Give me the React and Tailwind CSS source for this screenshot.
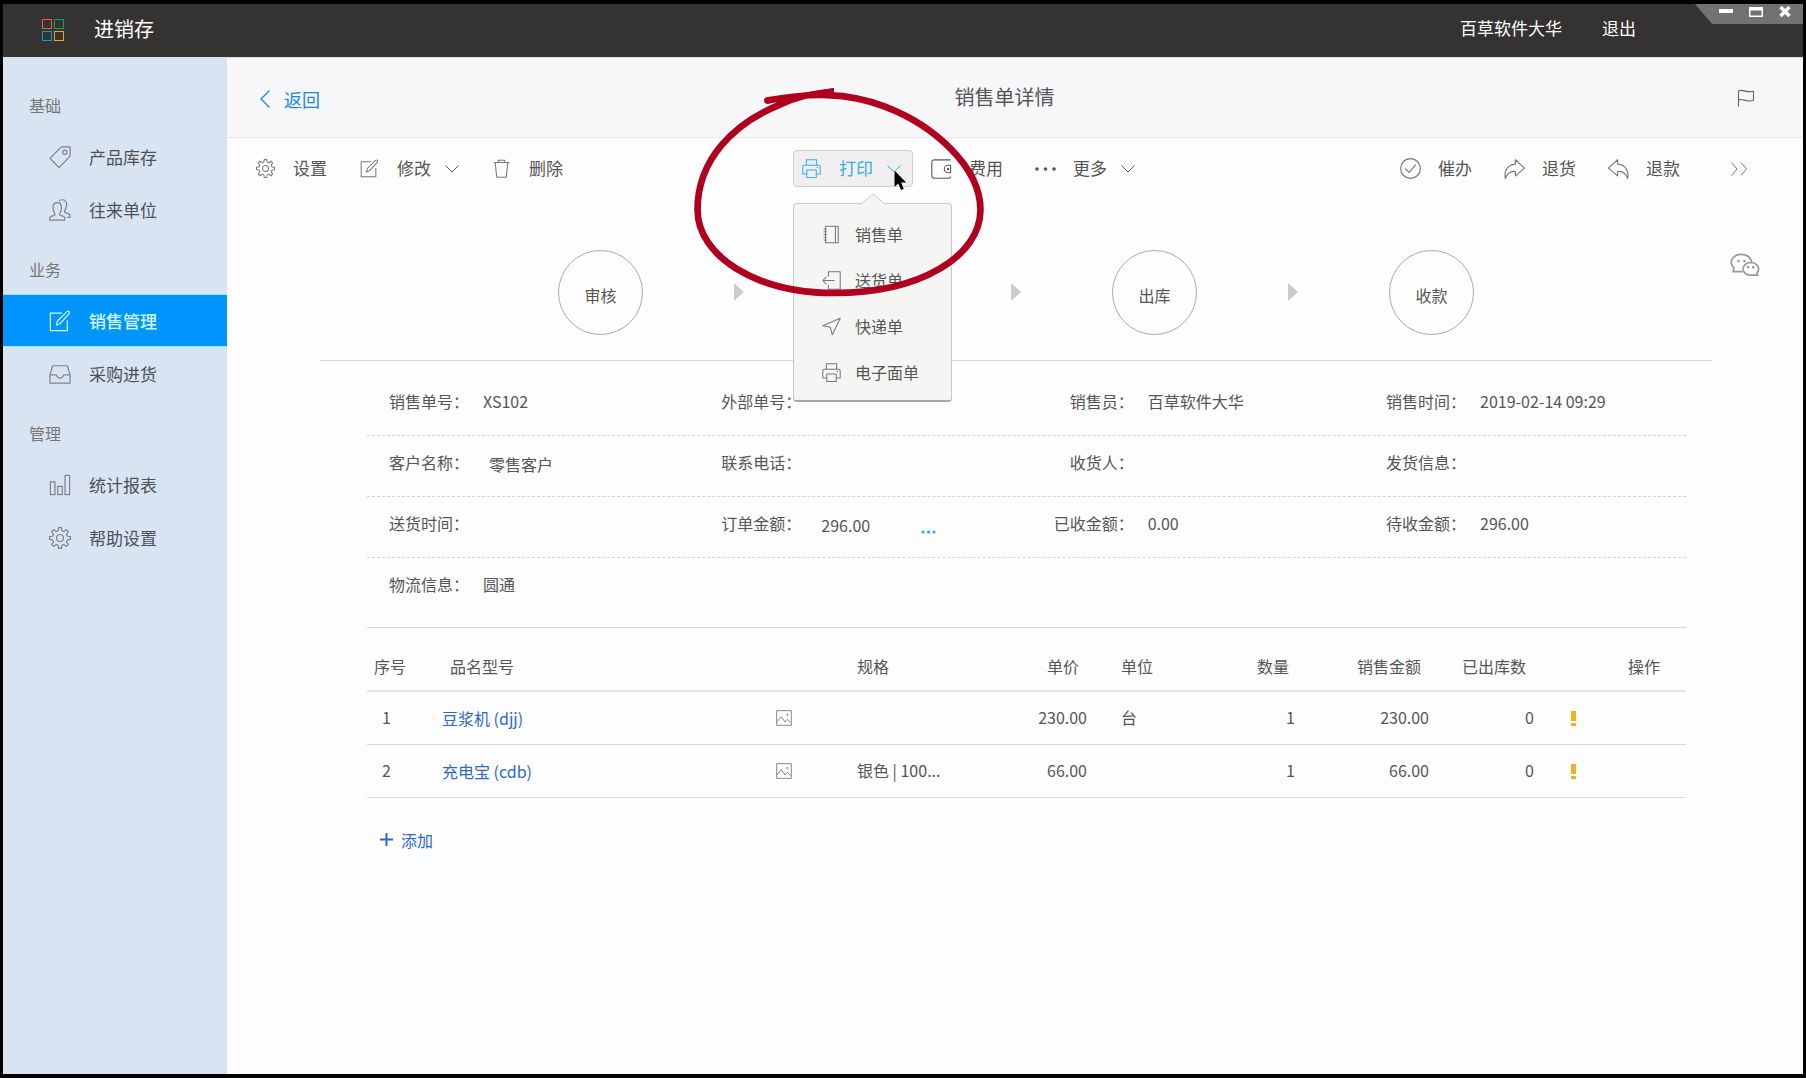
import clsx from "clsx";

// eight-tooth cog outline around (12, 12)
function cogPath() {
  const point = (radius, angle) => {
    const rad = (angle * Math.PI) / 180;
    return `${(12 + radius * Math.cos(rad)).toFixed(2)} ${(12 + radius * Math.sin(rad)).toFixed(2)}`;
  };
  let d = `M${point(11.5, -8)}`;
  for (let i = 0; i < 8; i++) {
    const a = i * 45;
    d += `L${point(11.5, a + 8)}L${point(9, a + 12)}Q${point(7.2, a + 22.5)} ${point(9, a + 33)}L${point(11.5, a + 37)}`;
  }
  return d + "Z";
}

const ICONS = {
  cog: (
    <>
      <path d={cogPath()} />
      <circle cx="12" cy="12" r="3.8" />
    </>
  ),
  tag: (
    <>
      <path d="M13.5 1h9.500v10L11 23.500 1 13.5z" />
      <circle cx="17.3" cy="6.8" r="2.3" />
    </>
  ),
  users: (
    <>
      <path d="M.8 23v-2c0-1.500.7-2 2-2.300 2.500-.6 3.600-.8 3.800-2 .1-.9-2.200-3-2.200-7C4.400 6 6.200 4 9 4s4.600 2 4.600 5.700c0 4-2.300 6.100-2.200 7 .2 1.200 1.300 1.400 3.800 2 1.300.3 2 .8 2 2.300v2z" />
      <path d="M11 2.300C11.800 1.300 13 .8 14.500.8c2.900 0 4.700 2 4.700 5.500 0 4-2.200 6-2.200 7.200 0 1.300 1.400 1.700 3.300 2.200 1.800.5 2.700 1 2.700 2.500V20h-3" />
    </>
  ),
  edit: (
    <>
      <path d="M14 3.500H1.500v19H20V11.500" />
      <path d="M8 16.500l1.300-4.500L19.500 1.800q1.200-1 2.300 0t0 2.400L11.800 15z" />
    </>
  ),
  inbox: (
    <>
      <path d="M4 3h16l3 10v9H1v-9z" />
      <path d="M1 13h7q1 3.500 4 3.500t4-3.500h7" />
    </>
  ),
  chart: <path d="M1.500 8.500h5v14h-5zM9.500 13.500h5v9h-5zM17.500 1.500h5v21h-5z" />,
  trash: (
    <>
      <path d="M2 4.500h20M8 4.500v-3h8v3" />
      <path d="M4 4.500l2 18.500h12l2-18.500" />
    </>
  ),
  printer: (
    <>
      <path d="M5.500 8V1h13v7" />
      <path d="M6 19H1V10q0-2 2-2h18q2 0 2 2v9h-5" />
      <path d="M6 14h12v9.500H6zM18.500 10.800h2" />
    </>
  ),
  wallet: (
    <>
      <path d="M23.500 1H4Q1 1 1 4v16q0 3 3 3h17q2.500 0 2.500-2" />
      <path d="M23.500 7.500h-3a4.500 4.500 0 0 0 0 9h3z" />
      <circle cx="20.500" cy="12" r=".8" />
    </>
  ),
  notebook: (
    <>
      <path d="M4.500 1.500h16v21h-16zM17 1.500v21" />
      <path d="M2 5h4M2 8.500h4M2 12h4M2 15.500h4M2 19h4" />
    </>
  ),
  dispatch: (
    <>
      <path d="M8 7V1h15v22H8v-6" />
      <path d="M16 12H1M5.500 7.500L1 12l4.500 4.500" />
    </>
  ),
  send: <path d="M23 1.500L1 11l9.500 2L13 22.500z" />,
  check: (
    <>
      <circle cx="12" cy="12" r="11.300" />
      <path d="M6 12l4.500 4.500L18 7.500" />
    </>
  ),
  forward: <path d="M13 2l10.500 9.500L13 20.500V15.500C7 14.500 4 17 1.500 23.500 0 14 4 8 13 7z" />,
  reply: <path d="M11 2L.5 11.500 11 20.500V15.500c6-1 9 1.500 11.500 8C24 14 20 8 11 7z" />,
  flag: (
    <>
      <path d="M2 23.500V2.500" />
      <path d="M2 2.500c6-3 9 3 20 .5v12c-10 3.500-14-3-20-.5" />
    </>
  ),
  image: (
    <>
      <path d="M1 1h22v22H1z" />
      <path d="M1.500 18l6.500-8 5.500 8 3.500-4 5.500 5" />
      <circle cx="17" cy="7.500" r="1" />
    </>
  ),
  wechat: (
    <>
      <path d="M10.500 17H2.500l.8-3C-1.500 9.500 2 2.800 9.500 2.800c4.500 0 7.800 2.700 8.500 6.200" />
      <path d="M17 9.500c-8 .2-8.500 10.300 0 10.500h6l-.8-1.800c3.200-3.500.6-8.600-5.200-8.700z" />
      <path d="M7 8.200v.2M12 8.200v.2M15 13.200v.2M19.200 13.200v.2" strokeWidth="2" strokeLinecap="round" />
    </>
  ),
};

function Icon({ name, className, strokeWidth = 1.3 }) {
  return (
    <svg
      viewBox="0 0 24 24"
      fill="none"
      stroke="currentColor"
      strokeWidth={strokeWidth}
      strokeLinejoin="round"
      aria-hidden="true"
      className={clsx("shrink-0 overflow-visible", className)}
    >
      {ICONS[name]}
    </svg>
  );
}

function Caret() {
  return (
    <svg viewBox="0 0 14 8" fill="none" stroke="currentColor" className="ml-[14px] h-2 w-[14px]" aria-hidden="true">
      <path d="M.5.5L7 7 13.500.5" />
    </svg>
  );
}

const NAV = [
  {
    title: "基础",
    items: [
      { icon: "tag", label: "产品库存" },
      { icon: "users", label: "往来单位" },
    ],
  },
  {
    title: "业务",
    items: [
      { icon: "edit", label: "销售管理", active: true },
      { icon: "inbox", label: "采购进货" },
    ],
  },
  {
    title: "管理",
    items: [
      { icon: "chart", label: "统计报表" },
      { icon: "cog", label: "帮助设置" },
    ],
  },
];

const PRINT_MENU = [
  { icon: "notebook", label: "销售单" },
  { icon: "dispatch", label: "送货单" },
  { icon: "send", label: "快递单" },
  { icon: "printer", label: "电子面单" },
];

// the second step has no caption while the print menu is open over it
const STEPS = ["审核", "", "出库", "收款"];

const DETAILS = [
  [
    { label: "销售单号", value: "XS102" },
    { label: "外部单号" },
    { label: "销售员", value: "百草软件大华" },
    { label: "销售时间", value: "2019-02-14 09:29" },
  ],
  [
    { label: "客户名称", value: "零售客户", editable: true },
    { label: "联系电话" },
    { label: "收货人" },
    { label: "发货信息" },
  ],
  [
    { label: "送货时间" },
    { label: "订单金额", value: "296.00", editable: true, more: true },
    { label: "已收金额", value: "0.00" },
    { label: "待收金额", value: "296.00" },
  ],
  [{ label: "物流信息", value: "圆通" }],
];

const ROWS = [
  { no: 1, name: "豆浆机 (djj)", spec: "", price: "230.00", unit: "台", qty: 1, total: "230.00", out: 0 },
  { no: 2, name: "充电宝 (cdb)", spec: "银色 | 100...", price: "66.00", unit: "", qty: 1, total: "66.00", out: 0 },
];

function TopBar() {
  return (
    <header className="relative flex h-[53px] items-center bg-[#353332] pr-[167px] pl-[39px] text-white">
      <div className="mb-[2px] grid grid-cols-2 gap-[2px]" aria-hidden="true">
        <span className="size-[10px] border border-[#e8604c]" />
        <span className="size-[10px] border border-[#12a05c]" />
        <span className="size-[10px] border border-[#0f9ad8]" />
        <span className="size-[10px] border border-[#f0a020]" />
      </div>
      <h1 className="ml-[30px] pb-1 text-xl">进销存</h1>
      <div className="ml-auto flex gap-10 pb-[6px] text-[17px]">
        <a href="#account">百草软件大华</a>
        <a href="#logout">退出</a>
      </div>
      <div className="absolute top-0 right-0 flex h-5 w-[108px] items-start gap-4 bg-[#727272] pt-[2px] pl-6 [clip-path:polygon(0_0,100%_0,100%_100%,17px_100%)]">
        <button type="button" aria-label="最小化">
          <svg viewBox="0 0 14 12" className="h-3 w-[14px]"><path d="M0 3h14v4H0z" fill="#fff" /></svg>
        </button>
        <button type="button" aria-label="最大化">
          <svg viewBox="0 0 14 12" className="h-3 w-[14px]"><path d="M0 1h14v10H0zM1.500 4.500v5h11v-5z" fill="#fff" fillRule="evenodd" /></svg>
        </button>
        <button type="button" aria-label="关闭">
          <svg viewBox="0 0 12 12" className="size-3"><path d="M1.500 1l9 9M10.500 1l-9 9" stroke="#fff" strokeWidth="3.500" /></svg>
        </button>
      </div>
    </header>
  );
}

function Sidebar() {
  return (
    <nav className="w-[224px] shrink-0 bg-[#d9e4f2] pt-[15px]">
      {NAV.map((group) => (
        <section key={group.title}>
          <h2 className="h-[58px] pt-[21px] pl-[26px] text-base leading-6 text-[#777]">{group.title}</h2>
          <ul>
            {group.items.map((item) => (
              <li key={item.label}>
                <a
                  href="#nav"
                  className={clsx(
                    "flex h-[53px] items-center pl-[46px] text-[17px]",
                    item.active
                      ? "border-y border-[#7df3fb] bg-[#0094fd] font-medium text-[#d5fdff]"
                      : "text-[#4c5157]"
                  )}
                >
                  <Icon name={item.icon} className={clsx("size-[22px]", !item.active && "text-[#7c828a]")} />
                  <span className="ml-[18px]">{item.label}</span>
                </a>
              </li>
            ))}
          </ul>
        </section>
      ))}
    </nav>
  );
}

function PageHeader() {
  return (
    <div className="grid h-[81px] grid-cols-[1fr_auto_1fr] items-center border-y border-t-[#e4dfe2] border-b-[#e6e6ea] bg-[#f7f7fa] pr-12 pl-[27px]">
      <a href="#back" className="flex items-center gap-[14px] pt-[2px] pl-[6px] text-lg text-[#1b87e6]">
        <svg viewBox="0 0 10 18" fill="none" stroke="currentColor" strokeWidth="1.300" className="h-[18px] w-[10px]" aria-hidden="true">
          <path d="M9.500.5L1 9l8.500 8.500" />
        </svg>
        返回
      </a>
      <h2 className="pb-[2px] text-xl text-[#555]">销售单详情</h2>
      <button type="button" aria-label="标记" className="justify-self-end text-[#666]">
        <Icon name="flag" className="size-[18px]" strokeWidth={1.5} />
      </button>
    </div>
  );
}

function ToolButton({ icon, label, caret, large }) {
  return (
    <button type="button" className="flex items-center">
      <Icon name={icon} className={clsx("text-[#777]", large ? "size-[21px]" : "size-[19px]")} />
      <span className={clsx("pb-[2px]", large ? "ml-[17px]" : "ml-[18px]")}>{label}</span>
      {caret && <Caret />}
    </button>
  );
}

function PrintMenu() {
  return (
    <div className="absolute top-[53px] left-0 z-10 w-[159px] rounded border border-b-2 border-[#c9c9c9] border-b-[#a5a5a5] bg-[#f5f5f4] pt-[7px] pb-[5px] text-base">
      <svg viewBox="0 0 26 12" className="absolute -top-[11px] left-[66px] h-3 w-[26px]" aria-hidden="true">
        <path d="M0 12L13 1l13 11" fill="#f5f5f4" stroke="#c9c9c9" />
      </svg>
      <ul>
        {PRINT_MENU.map((item) => (
          <li key={item.label}>
            <button type="button" className="flex h-[46px] w-full items-center pl-7">
              <Icon name={item.icon} className="size-[19px] text-[#777]" />
              <span className="ml-[14px]">{item.label}</span>
            </button>
          </li>
        ))}
      </ul>
    </div>
  );
}

// hand-drawn ring and pointer that call out the print button
function Callout() {
  return (
    <div className="pointer-events-none">
      <svg viewBox="0 0 900 700" className="absolute -top-[80px] -left-[113px] z-20 h-[233px] w-[300px] max-w-none overflow-visible" aria-hidden="true">
        <path
          d="M260 92C390 68 500 66 615 110C760 165 902 290 902 420C902 560 720 670 462 670C230 670 52 560 52 420C52 270 160 160 300 104C340 85 400 68 462 66"
          fill="none"
          stroke="#b00020"
          strokeWidth="20"
          strokeLinejoin="round"
        />
        <circle cx="262" cy="92" r="10" fill="#b00020" />
        <path d="M370 69L462 53V80H350z" fill="#b00020" />
      </svg>
      <svg viewBox="0 0 13 21" className="absolute top-[20px] left-[101px] z-30 h-[21px] w-[13px] overflow-visible" aria-hidden="true">
        <path d="M.5.5v16.500l3.700-3.500 2.800 6.500 2.800-1.200-2.700-6.300h5.200z" fill="#000" stroke="#fff" strokeWidth="1.200" paintOrder="stroke" />
      </svg>
    </div>
  );
}

function Toolbar() {
  return (
    <div className="grid grid-cols-[537px_1fr_auto] items-center pt-3 pr-[56px] pl-[29px] text-[17px] text-[#555]">
      <div className="flex items-center gap-[33px]">
        <ToolButton icon="cog" label="设置" />
        <ToolButton icon="edit" label="修改" caret />
        <ToolButton icon="trash" label="删除" />
      </div>
      <div className="flex items-center">
        <div className="relative">
          <button type="button" aria-expanded="true" className="flex h-[37px] w-[120px] items-center rounded border border-[#cfcfcf] bg-[#efefef] pl-2 text-[#36abe6]">
            <Icon name="printer" className="size-[19px]" />
            <span className="ml-[18px] pb-[2px]">打印</span>
            <Caret />
          </button>
          <PrintMenu />
          <Callout />
        </div>
        <button type="button" className="ml-[18px] flex items-center">
          <Icon name="wallet" className="size-5" />
          <span className="ml-[18px] pb-[2px]">费用</span>
        </button>
        <button type="button" className="ml-8 flex items-center">
          <svg viewBox="0 0 21 4" className="h-1 w-[21px]" fill="currentColor" aria-hidden="true">
            <circle cx="2" cy="2" r="1.800" />
            <circle cx="10.500" cy="2" r="1.800" />
            <circle cx="19" cy="2" r="1.800" />
          </svg>
          <span className="ml-[17px] pb-[2px]">更多</span>
          <Caret />
        </button>
      </div>
      <div className="flex items-center gap-8">
        <ToolButton icon="check" label="催办" large />
        <ToolButton icon="forward" label="退货" large />
        <ToolButton icon="reply" label="退款" large />
        <button type="button" aria-label="展开" className="ml-[19px]">
          <svg viewBox="0 0 16 14" fill="none" stroke="#777" className="h-[14px] w-4" aria-hidden="true">
            <path d="M.5.5L6 7 .5 13.500M10 .5L15.500 7 10 13.500" />
          </svg>
        </button>
      </div>
    </div>
  );
}

function Steps() {
  return (
    <div className="relative mr-[91px] ml-[93px] flex h-[174px] items-center justify-center border-b border-[#d5d5d5] pt-[37px]">
      <ol className="flex items-center">
        {STEPS.map((step, i) => (
          <li key={i} className="flex items-center">
            {i > 0 && (
              <svg viewBox="0 0 10 18" className="mx-[91px] h-[18px] w-[10px]" aria-hidden="true">
                <path d="M0 0l10 9-10 9z" fill="#cbcbcb" />
              </svg>
            )}
            <span className="flex size-[85px] items-center justify-center rounded-full border border-[#aaa] pt-[6px] text-base">
              {step}
            </span>
          </li>
        ))}
      </ol>
      <button type="button" aria-label="微信" className="absolute top-[64px] -right-[47px] text-[#999]">
        <Icon name="wechat" className="size-[29px]" strokeWidth={1.4} />
      </button>
    </div>
  );
}

function Details() {
  return (
    <dl className="border-b border-[#d9d9d9] pt-[14px] pb-2">
      {DETAILS.map((row, i) => (
        <div
          key={i}
          className="grid h-[61px] grid-cols-[1fr_1fr_1fr_301px] border-b border-dashed border-[#d5d5d5] pt-[14px] pl-[21px] leading-6 last:border-0"
        >
          {row.map((field) => (
            <div key={field.label} className="flex">
              <dt className="w-[81px] shrink-0 text-right whitespace-nowrap">{field.label}：</dt>
              <dd className={clsx("ml-[14px] flex", field.editable && "pt-[2px] pl-[6px]")}>
                {field.value}
                {field.more && (
                  <button type="button" aria-label="金额明细" className="ml-[51px] self-start text-[#2aa5e0]">
                    <svg viewBox="0 0 15 4" className="mt-[17px] h-1 w-[15px]" fill="currentColor">
                      <circle cx="2" cy="2" r="1.500" />
                      <circle cx="7.500" cy="2" r="1.500" />
                      <circle cx="13" cy="2" r="1.500" />
                    </svg>
                  </button>
                )}
              </dd>
            </div>
          ))}
        </div>
      ))}
    </dl>
  );
}

function ItemsTable() {
  return (
    <table className="w-full table-fixed text-left">
      <colgroup>
        <col className="w-[75px]" />
        <col />
        <col className="w-[97px]" />
        <col className="w-[130px]" />
        <col className="w-[100px]" />
        <col className="w-[100px]" />
        <col className="w-[108px]" />
        <col className="w-[134px]" />
        <col className="w-[105px]" />
        <col className="w-[78px]" />
        <col className="w-[74px]" />
      </colgroup>
      <thead>
        <tr className="h-[63px] border-b-2 border-[#e4e4e4] *:pt-[14px] *:font-normal">
          <th className="pl-[7px]">序号</th>
          <th className="pl-2">品名型号</th>
          <th />
          <th>规格</th>
          <th className="pr-2 text-right">单价</th>
          <th className="pl-[34px]">单位</th>
          <th className="pr-[6px] text-right">数量</th>
          <th className="pr-2 text-right">销售金额</th>
          <th className="pr-2 text-right">已出库数</th>
          <th />
          <th className="pl-4">操作</th>
        </tr>
      </thead>
      <tbody>
        {ROWS.map((row) => (
          <tr key={row.no} className="h-[53px] border-b border-[#d9d9d9]">
            <td className="pb-[2px] pl-[15px]">{row.no}</td>
            <td>
              <a href="#item" className="text-[#2c68c4]">{row.name}</a>
            </td>
            <td className="pl-4">
              <Icon name="image" className="size-4 text-[#888]" strokeWidth={1.5} />
            </td>
            <td className="pb-[2px]">{row.spec}</td>
            <td className="pb-[2px] text-right">{row.price}</td>
            <td className="pb-[2px] pl-[34px]">{row.unit}</td>
            <td className="pb-[2px] text-right">{row.qty}</td>
            <td className="pb-[2px] text-right">{row.total}</td>
            <td className="pb-[2px] text-right">{row.out}</td>
            <td className="pt-[2px]">
              <svg viewBox="0 0 5 15" className="mx-auto h-[15px] w-[5px]" role="img" aria-label="未出库">
                <path d="M0 0h5v10H0zM0 12h5v3H0z" fill="#f2b022" />
              </svg>
            </td>
            <td />
          </tr>
        ))}
      </tbody>
    </table>
  );
}

export default function App() {
  return (
    <div className="flex min-h-screen flex-col border-x-[3px] border-y-4 border-black bg-[#fdfdfd] font-['Noto_Sans_CJK_SC',sans-serif] text-base text-[#555]">
      <TopBar />
      <div className="flex flex-1">
        <Sidebar />
        <main className="min-w-0 flex-1">
          <PageHeader />
          <Toolbar />
          <Steps />
          <div className="mr-[117px] ml-[140px]">
            <Details />
            <ItemsTable />
            <button type="button" className="mt-[30px] ml-[13px] flex items-center gap-2 text-[#2a68cc]">
              <svg viewBox="0 0 13 13" className="size-[13px]" stroke="currentColor" strokeWidth="2" aria-hidden="true">
                <path d="M6.500 0v13M0 6.500h13" />
              </svg>
              添加
            </button>
          </div>
        </main>
      </div>
    </div>
  );
}
